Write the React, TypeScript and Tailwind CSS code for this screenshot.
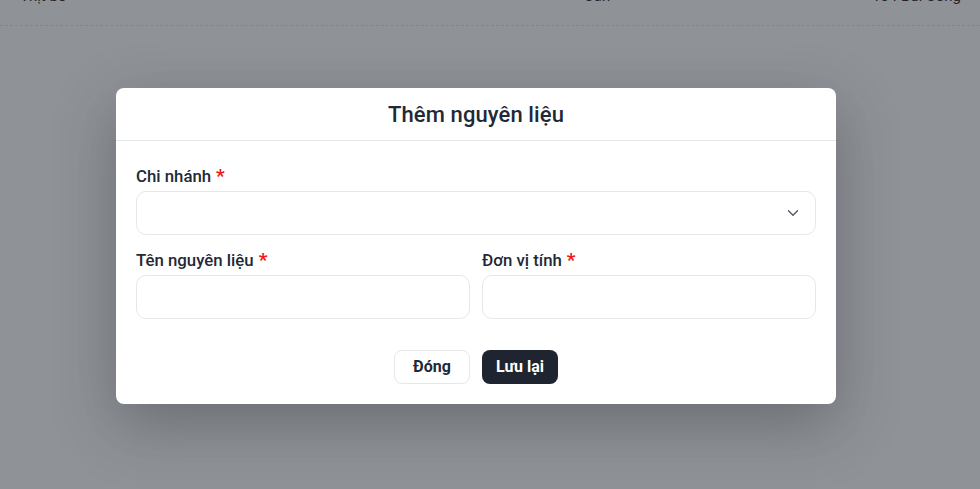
import { ChevronDown } from "lucide-react";

export default function App() {
  return (
    <div
      className="relative h-[489px] w-[980px] overflow-hidden bg-[#8f9297]"
      style={{ fontFamily: "Roboto, 'Noto Sans', sans-serif" }}
    >
      {/* Table row behind the overlay */}
      <div className="mt-[-12px] flex h-[38px] items-start border-b border-dashed border-[#83868b] text-[15px] leading-[16px] text-[#1f2329]">
        <span className="ml-[20px] w-[540px]">Thịt bò</span>
        <span className="ml-[24px] w-[280px]">Cân</span>
        <span className="ml-[8px] whitespace-nowrap">134 Bùi Công</span>
      </div>

      {/* Modal */}
      <div className="absolute left-[116px] top-[88px] w-[720px] rounded-lg bg-white shadow-[0_20px_60px_rgba(40,44,50,0.35)]">
        <div className="flex h-[53px] items-center justify-center border-b border-[#e5e7eb]">
          <h2 className="text-[22px] font-medium tracking-[0.1px] text-[#1f2937]">Thêm nguyên liệu</h2>
        </div>

        <div className="px-5 pb-5 pt-[25px]">
          <div>
            <label className="flex items-center gap-[5px] text-[16.8px] font-medium leading-[20px] text-[#1f2937]">
              Chi nhánh <span className="text-[19px] font-bold text-[#f01818]">*</span>
            </label>
            <div className="mt-[5px] flex h-[44px] items-center justify-end rounded-[10px] border border-[#e5e7eb] px-[13px]">
              <ChevronDown size={18} strokeWidth={1.75} className="text-[#4b5563]" />
            </div>
          </div>

          <div className="mt-[15px] grid grid-cols-2 gap-3">
            <div>
              <label className="flex items-center gap-[5px] text-[16.8px] font-medium leading-[20px] text-[#1f2937]">
                Tên nguyên liệu <span className="text-[19px] font-bold text-[#f01818]">*</span>
              </label>
              <div className="mt-[5px] h-[44px] rounded-[10px] border border-[#e5e7eb]" />
            </div>
            <div>
              <label className="flex items-center gap-[5px] text-[16.8px] font-medium leading-[20px] text-[#1f2937]">
                Đơn vị tính <span className="text-[19px] font-bold text-[#f01818]">*</span>
              </label>
              <div className="mt-[5px] h-[44px] rounded-[10px] border border-[#e5e7eb]" />
            </div>
          </div>

          <div className="mt-[31px] flex justify-center gap-3">
            <button className="h-[34px] w-[76px] rounded-lg border border-[#e5e7eb] bg-white text-[16px] font-bold text-[#1f2937]">
              Đóng
            </button>
            <button className="h-[34px] w-[76px] rounded-lg bg-[#1f2530] text-[16px] font-bold text-white">
              Lưu lại
            </button>
          </div>
        </div>
      </div>
    </div>
  );
}
